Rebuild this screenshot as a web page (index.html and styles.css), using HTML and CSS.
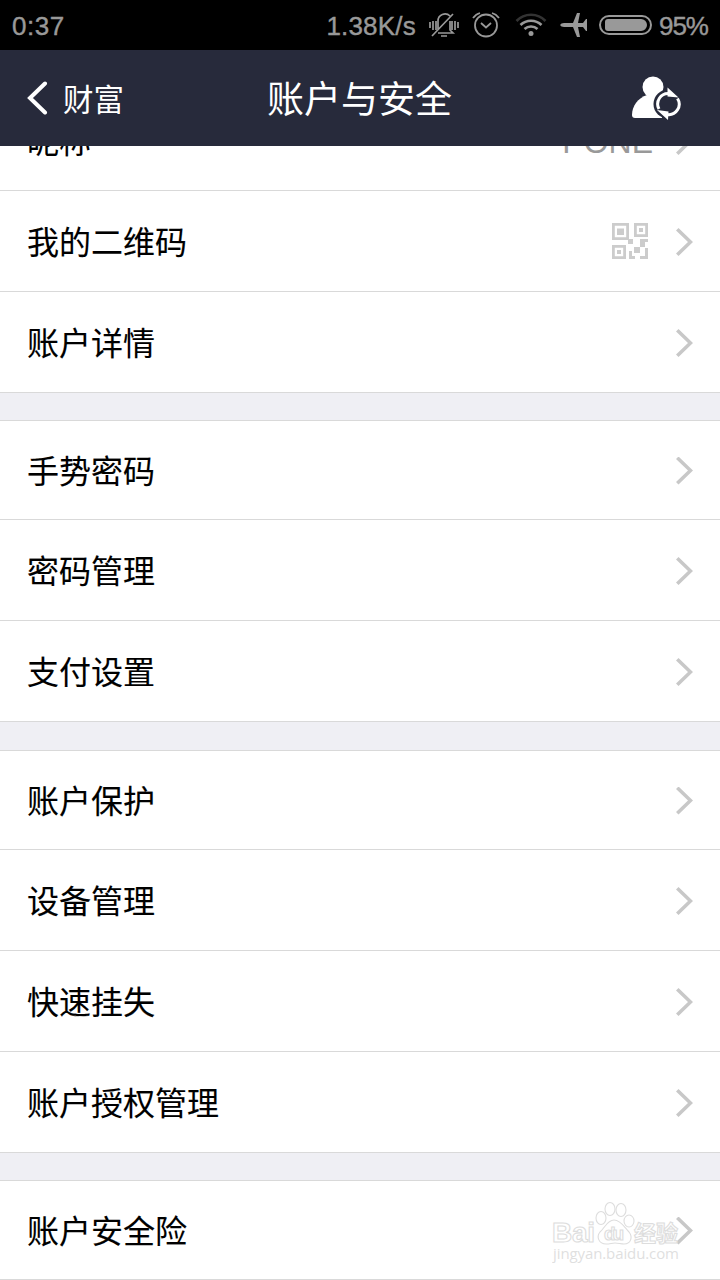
FILE: index.html
```html
<!DOCTYPE html>
<html lang="zh-CN">

<head>
  <meta charset="UTF-8">
  <meta name="viewport" content="width=device-width, initial-scale=1.0">
  <title>账户与安全</title>
  <link rel="stylesheet" href="styles.css">
</head>

<body>
  <div class="status-bar">
    <span class="time">0:37</span>
    <span class="speed">1.38K/s</span>
    <svg class="icon-mute" width="30" height="28" viewBox="0 0 30 28" fill="none" stroke="currentColor" stroke-width="1.7">
      <path d="M1 11v6M4 10v9M7 10v9M23 10v9M26 10v9M29 11v6" />
      <path d="M9 18v-8a7 7 0 0 1 12-5M21 10v9l3 3H9M3 25L24 3M12 25h6" />
    </svg>
    <svg class="icon-alarm" width="28" height="28" viewBox="0 0 28 28" fill="none" stroke="currentColor" stroke-width="1.8">
      <circle cx="14" cy="14.500" r="11" />
      <path d="M9 12l5 4.500 5-4.500M1 7q3-4 7-5M20 2q4 1 7 5" />
    </svg>
    <svg class="icon-wifi" width="32" height="26" viewBox="0 0 32 26" fill="none" stroke="currentColor" stroke-width="2.6">
      <path class="faint" d="M1.500 9a20 20 0 0 1 29 0" />
      <path d="M5.500 13a15 15 0 0 1 21 0M9.500 17a9.500 9.500 0 0 1 13 0" />
      <circle cx="16" cy="21.500" r="2.500" fill="currentColor" stroke="none" />
    </svg>
    <svg class="icon-plane" width="28" height="24" viewBox="0 0 28 24" fill="currentColor">
      <path d="M0 12q1-2 4-2h9L17 0h3l-2 10h5l3-4h1v12h-1l-3-4h-5l2 10h-3l-4-10H4q-3 0-4-2z" />
    </svg>
    <div class="battery"><div class="battery-level"></div></div>
    <span class="percent">95%</span>
  </div>

  <header class="nav">
    <a class="back">
      <svg width="22" height="34" viewBox="0 0 22 34" fill="none" stroke="currentColor" stroke-width="4" stroke-linecap="round">
        <path d="M19 2.500L4 17l15 14.500" />
      </svg>
      <span>财富</span>
    </a>
    <h1>账户与安全</h1>
    <svg class="switch-user" width="49" height="44" viewBox="0 0 49 44">
      <circle cx="21" cy="11" r="10.500" fill="currentColor" />
      <path fill="currentColor" d="M15 19C6 22 0 30 0 39q0 3 3 3h27V19z" />
      <circle class="ring-gap" cx="36" cy="28" r="14.500" />
      <g fill="none" stroke="currentColor" stroke-width="3">
        <path d="M27 33A10.500 10.500 0 0 1 37 17.500M45.500 22.500A10.500 10.500 0 0 1 35 38.500" />
      </g>
      <path fill="currentColor" d="M35.500 11.500L46.500 21.500 35.500 20.500zM36 44L25 34l11.500 1.500z" />
    </svg>
  </header>

  <main class="list">
    <section class="group">
      <div class="row"><span>昵称</span><span class="value">PONE</span><i class="arrow"></i></div>
      <div class="row"><span>我的二维码</span>
        <svg class="qr" width="36" height="36" viewBox="0 0 36 36">
          <g fill="none" stroke="currentColor" stroke-width="2.800">
            <path d="M1.400 1.400h14.200v14.200H1.400zM23.400 1.400h11.200v11.200H23.400zM1.400 23.400h11.200v11.200H1.400z" />
          </g>
          <path fill="currentColor" d="M5 5.500h7v6.500H5zM27 5h4v4h-4zM5 27h4v4H5zM16 16h5v5h-5zM28 16h8v3h-3v5h-5zM22 24h6v6h-6zM17 28h3v5h3v3h-6zM33 25h3v11h-8v-3h5z" />
        </svg>
        <i class="arrow"></i>
      </div>
      <div class="row"><span>账户详情</span><i class="arrow"></i></div>
    </section>

    <section class="group">
      <div class="row"><span>手势密码</span><i class="arrow"></i></div>
      <div class="row"><span>密码管理</span><i class="arrow"></i></div>
      <div class="row"><span>支付设置</span><i class="arrow"></i></div>
    </section>

    <section class="group wide-gap">
      <div class="row"><span>账户保护</span><i class="arrow"></i></div>
      <div class="row"><span>设备管理</span><i class="arrow"></i></div>
      <div class="row"><span>快速挂失</span><i class="arrow"></i></div>
      <div class="row"><span>账户授权管理</span><i class="arrow"></i></div>
    </section>

    <section class="group">
      <div class="row"><span>账户安全险</span><i class="arrow"></i></div>
    </section>
  </main>

  <!-- Watermark -->
  <svg class="watermark" width="132" height="64" viewBox="0 0 132 64">
    <g class="outline">
      <ellipse cx="49" cy="17" rx="5" ry="6.500" />
      <ellipse cx="58" cy="8" rx="5" ry="6.500" />
      <ellipse cx="69" cy="9" rx="5" ry="6.500" />
      <ellipse cx="77" cy="20" rx="5" ry="6" />
      <path d="M62 19c-7 0-9 8-14 12-4 5-1 12 6 12 4 0 6-1 9-1s6 1 9 1c7 0 9-7 5-12-4-4-8-12-15-12z" />
      <text x="0" y="41" class="wm-bai" textLength="43">Bai</text>
      <text x="52" y="39" class="wm-du" textLength="20">du</text>
      <text x="82" y="40" class="wm-cn" textLength="44">经验</text>
    </g>
    <text x="1" y="58" class="wm-url" textLength="126">jingyan.baidu.com</text>
  </svg>
</body>

</html>
```
FILE: styles.css
```css
* {
  margin: 0;
  padding: 0;
  box-sizing: border-box;
}

body {
  width: 720px;
  height: 1280px;
  overflow: hidden;
  position: relative;
  display: flex;
  flex-direction: column;
  background: #efeff4;
  color: #000;
  font-family: Roboto, "Noto Sans CJK SC", sans-serif;
}

.status-bar {
  flex: none;
  height: 50px;
  padding: 0 12px;
  display: flex;
  align-items: center;
  background: #000;
  color: #999;
  font-family: "Liberation Sans", sans-serif;
  font-size: 26px;
  -webkit-text-stroke: 0.4px;
}

.status-bar span {
  padding-top: 2px;
}

.time {
  letter-spacing: 0.5px;
}

.speed {
  margin-left: auto;
  letter-spacing: 0.2px;
}

.icon-mute {
  margin-left: 13px;
}

.icon-alarm {
  margin-left: 13px;
}

.icon-wifi {
  margin-left: 15px;
}

.faint {
  stroke: #333;
}

.icon-plane {
  margin-left: 13px;
}

.battery {
  width: 53px;
  height: 20px;
  margin-left: 11px;
  padding: 2px 4px;
  border: 2px solid #999;
  border-radius: 10px;
}

.battery-level {
  width: 42px;
  height: 12px;
  border-radius: 3px 6px 6px 3px;
  background: #999;
}

.percent {
  margin-left: 7px;
  letter-spacing: -1px;
}

.nav {
  flex: none;
  height: 96px;
  padding: 0 39px 0 26px;
  display: flex;
  align-items: center;
  justify-content: space-between;
  background: #272a3b;
  color: #fff;
}

.back {
  display: flex;
  align-items: center;
  font-size: 30.5px;
  gap: 15px;
}

.back span {
  padding-bottom: 1px;
}

.nav h1 {
  padding-bottom: 3px;
  font-size: 37px;
  font-weight: 400;
  margin-right: 37px;
}

/* sits on the nav background, separates the arrows from the figure */
.ring-gap {
  fill: #272a3b;
}

.list {
  flex: 1;
  overflow: hidden;
}

.group {
  margin-top: 27px;
  border-top: 1px solid #d9d9d9;
  background: #fff;
}

.group:first-child {
  margin-top: -57px;
}

.group.wide-gap {
  margin-top: 28px;
}

.row {
  height: 101px;
  padding: 2px 27px 0 27px;
  display: flex;
  align-items: center;
  border-bottom: 1px solid #d9d9d9;
  font-size: 32px;
  -webkit-text-stroke: 0.12px;
}

.row span {
  padding-bottom: 5px;
}

.row:first-child {
  height: 99px;
  padding-top: 1px;
}

.row:first-child span {
  padding-bottom: 3px;
}

.group:first-child .row:first-child {
  height: 101px;
  padding-top: 2px;
}

.group:first-child .row:first-child span {
  padding-bottom: 5px;
}

.arrow {
  width: 17px;
  height: 28px;
  margin-left: auto;
  background: #c8c8c8;
  clip-path: polygon(0 2.5px, 2.5px 0, 17px 14px, 2.5px 28px, 0 25.5px, 12px 14px);
}

.group:first-child .row:first-child .value {
  margin-left: auto;
  padding-top: 3px;
  padding-bottom: 0;
  color: #999;
  font-family: "Liberation Sans", sans-serif;
  -webkit-text-stroke: 0;
}

.qr {
  margin-left: auto;
  margin-top: -2px;
  color: #ccc;
}

.qr + .arrow {
  margin-left: 28px;
}

.value + .arrow {
  margin-left: 23px;
}

.watermark {
  position: absolute;
  left: 552px;
  top: 1201px;
}

.outline {
  fill: #fff;
  stroke: #ddd;
  stroke-width: 1.1;
}

.wm-bai {
  font: bold 28px "Liberation Sans", sans-serif;
}

.wm-du {
  font: bold 19px "Liberation Sans", sans-serif;
}

.wm-cn {
  font: bold 22px "Noto Sans CJK SC", sans-serif;
}

.wm-url {
  font: 15px "Open Sans", sans-serif;
  fill: #dfdfdf;
}
```
